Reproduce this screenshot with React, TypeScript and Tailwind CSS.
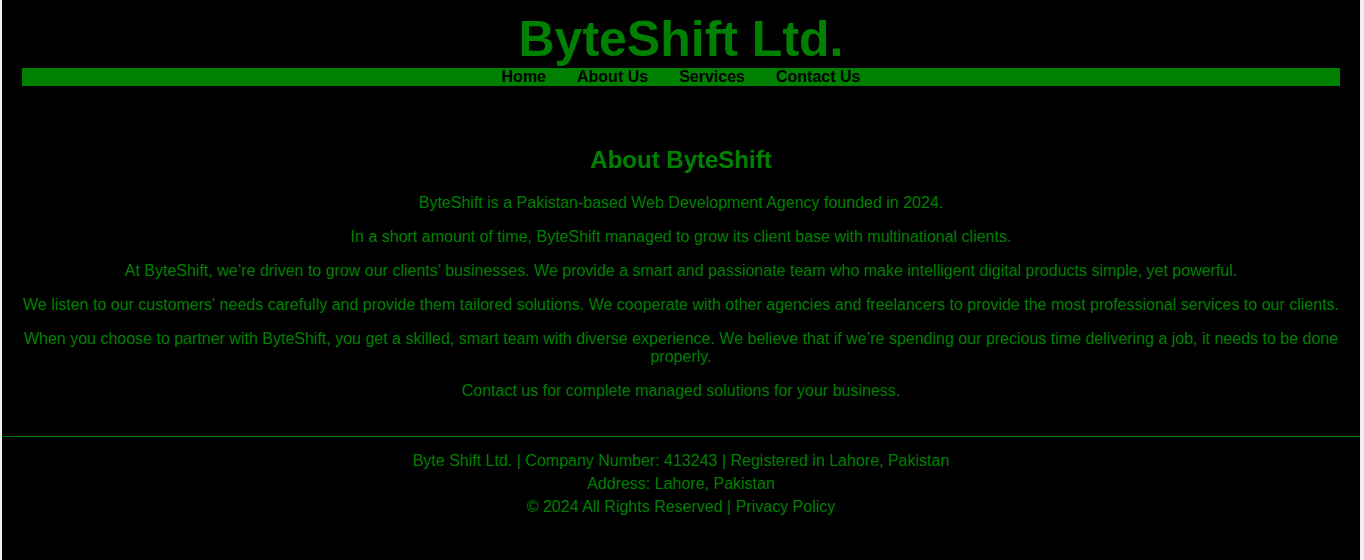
const paragraphs = [
  "ByteShift is a Pakistan-based Web Development Agency founded in 2024.",
  "In a short amount of time, ByteShift managed to grow its client base with multinational clients.",
  "At ByteShift, we’re driven to grow our clients’ businesses. We provide a smart and passionate team who make intelligent digital products simple, yet powerful.",
  "We listen to our customers' needs carefully and provide them tailored solutions. We cooperate with other agencies and freelancers to provide the most professional services to our clients.",
  "When you choose to partner with ByteShift, you get a skilled, smart team with diverse experience. We believe that if we’re spending our precious time delivering a job, it needs to be done properly.",
  "Contact us for complete managed solutions for your business.",
];

const links = ["Home", "About Us", "Services", "Contact Us"];

export default function App() {
  return (
    <div className="min-h-[560px] bg-[#efefef] pl-[2px] pr-[4px] font-['Liberation_Sans',Arial,sans-serif]">
      <div className="min-h-[560px] bg-black">
        {/* Header */}
        <header className="px-[20px] pt-[12px]">
          <h1 className="mb-[1px] text-center text-[50px] font-bold leading-[55px] text-[#008000]">
            ByteShift Ltd.
          </h1>
          <nav className="flex h-[18px] items-center justify-center gap-[31px] bg-[#008000]">
            {links.map((link) => (
              <a key={link} href="#" className="text-[16px] font-bold leading-[18px] text-black">
                {link}
              </a>
            ))}
          </nav>
        </header>

        {/* About */}
        <section className="px-[20px] pt-[40px] pb-[20px] text-center text-[#008000]">
          <h2 className="my-[20px] text-[24px] font-bold leading-[27.6px]">About ByteShift</h2>
          {paragraphs.map((text, i) => (
            <p key={i} className="my-[16px] text-[16px] leading-[18px]">
              {text}
            </p>
          ))}
        </section>

        {/* Footer */}
        <footer className="border-t border-[#008000] pt-[10px] pb-[20px] text-center text-[16px] leading-[18px] text-[#008000]">
          <p className="my-[5px]">Byte Shift Ltd. | Company Number: 413243 | Registered in Lahore, Pakistan</p>
          <p className="my-[5px]">Address: Lahore, Pakistan</p>
          <p className="my-[5px]">© 2024 All Rights Reserved | Privacy Policy</p>
        </footer>
      </div>
    </div>
  );
}
